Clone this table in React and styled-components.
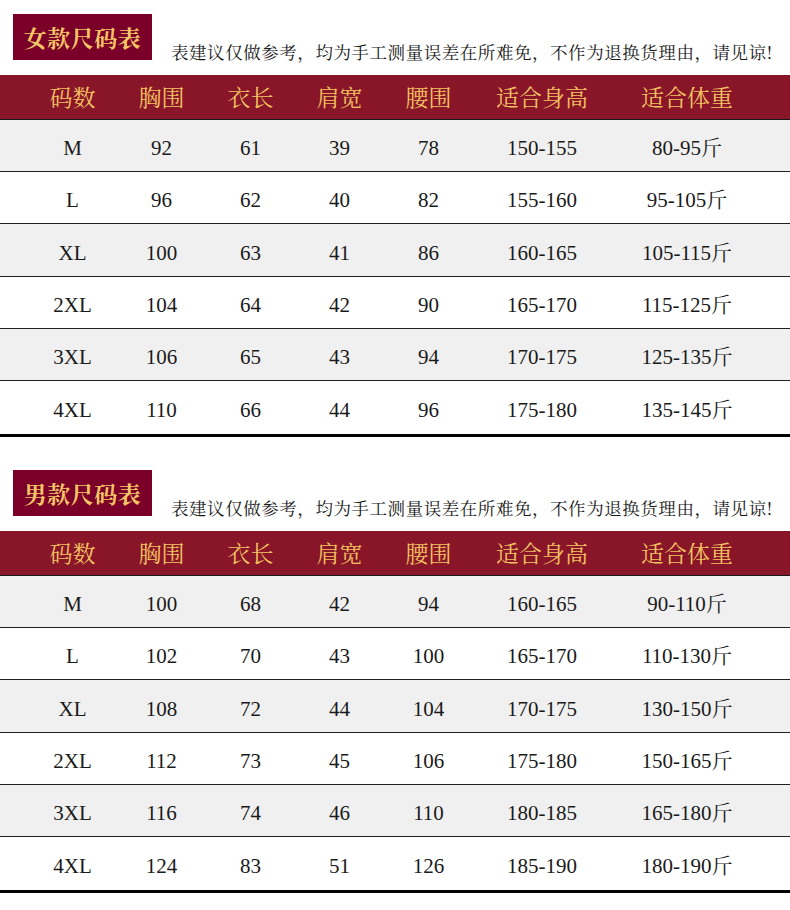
import React from "react";
import styled, { createGlobalStyle } from "styled-components";

const GlobalStyle = createGlobalStyle`
  body {
    margin: 0;
    background: #ffffff;
  }
`

const Page = styled.div`
  width: 790px;
  padding-top: 14px;
  background: #fff;
  font-family: "Liberation Serif", "Noto Serif CJK SC", "Noto Sans CJK SC", serif;
`

const Section = styled.section`
  margin-bottom: 33px;
`

const TitleRow = styled.div`
  display: flex;
  align-items: flex-start;
  padding-left: 13px;
  height: 46px;
  margin-bottom: ${p => p.gap}px;
`

const TitleBox = styled.div`
  width: 139px;
  height: 46px;
  background: #7b0029;
  color: #f3c565;
  display: flex;
  align-items: center;
  justify-content: center;
  font-family: "Noto Serif CJK SC", "Noto Sans CJK SC", serif;
  font-size: 23px;
  font-weight: 700;
  letter-spacing: 0.5px;
`

const Note = styled.div`
  margin-left: 19px;
  margin-top: 28px;
  font-family: "Noto Serif CJK SC", "Noto Sans CJK SC", serif;
  font-size: 17.5px;
  line-height: 20px;
  color: #1a1a1a;
  letter-spacing: 0.55px;
  white-space: nowrap;
`

const Grid = styled.div`
  display: grid;
  grid-template-columns: 89px 89px 89px 89px 89px 138px 152px;
  padding: 0 27px 0 28px;
  align-items: center;
`

const Header = styled(Grid)`
  height: 44px;
  background: #881528;
  border-bottom: 1px solid #1a1a1a;
  color: #f3c262;
  font-family: "Noto Serif CJK SC", "Noto Sans CJK SC", serif;
  font-size: 23px;
`

const Row = styled(Grid)`
  height: ${p => p.h}px;
  background: ${p => (p.shaded ? "#f0f0f0" : "#ffffff")};
  border-bottom: ${p => (p.last ? "3px solid #000" : "1px solid #1f1f1f")};
  color: #1a1a1a;
  font-size: 21px;
`

const Cell = styled.div`
  text-align: center;
  white-space: nowrap;
  line-height: 24px;
  padding-top: ${p => (p.head ? 0 : 5)}px;
`

const heads = ["码数", "胸围", "衣长", "肩宽", "腰围", "适合身高", "适合体重"];

// row heights (without the bottom rule) so the rules fall where the picture has them
const heights = [51, 51, 52, 51, 51, 53];

const women = [
  ["M", "92", "61", "39", "78", "150-155", "80-95斤"],
  ["L", "96", "62", "40", "82", "155-160", "95-105斤"],
  ["XL", "100", "63", "41", "86", "160-165", "105-115斤"],
  ["2XL", "104", "64", "42", "90", "165-170", "115-125斤"],
  ["3XL", "106", "65", "43", "94", "170-175", "125-135斤"],
  ["4XL", "110", "66", "44", "96", "175-180", "135-145斤"],
];

const men = [
  ["M", "100", "68", "42", "94", "160-165", "90-110斤"],
  ["L", "102", "70", "43", "100", "165-170", "110-130斤"],
  ["XL", "108", "72", "44", "104", "170-175", "130-150斤"],
  ["2XL", "112", "73", "45", "106", "175-180", "150-165斤"],
  ["3XL", "116", "74", "46", "110", "180-185", "165-180斤"],
  ["4XL", "124", "83", "51", "126", "185-190", "180-190斤"],
];

const note = "表建议仅做参考，均为手工测量误差在所难免，不作为退换货理由，请见谅!";

const SizeTable = ({ title, rows, gap }) => (
  <Section>
    <TitleRow gap={gap}>
      <TitleBox>{title}</TitleBox>
      <Note>{note}</Note>
    </TitleRow>
    <Header>
      {heads.map(h => <Cell head key={h}>{h}</Cell>)}
    </Header>
    {rows.map((r, i) => (
      <Row key={r[0]} h={heights[i]} shaded={i % 2 === 0} last={i === rows.length - 1}>
        {r.map((v, j) => <Cell key={j}>{v}</Cell>)}
      </Row>
    ))}
  </Section>
)

const App = () => {
  return (
    <>
      <GlobalStyle />
      <Page>
        <SizeTable title="女款尺码表" rows={women} gap={15} />
        <SizeTable title="男款尺码表" rows={men} gap={15} />
      </Page>
    </>
  )
}

export default App;
